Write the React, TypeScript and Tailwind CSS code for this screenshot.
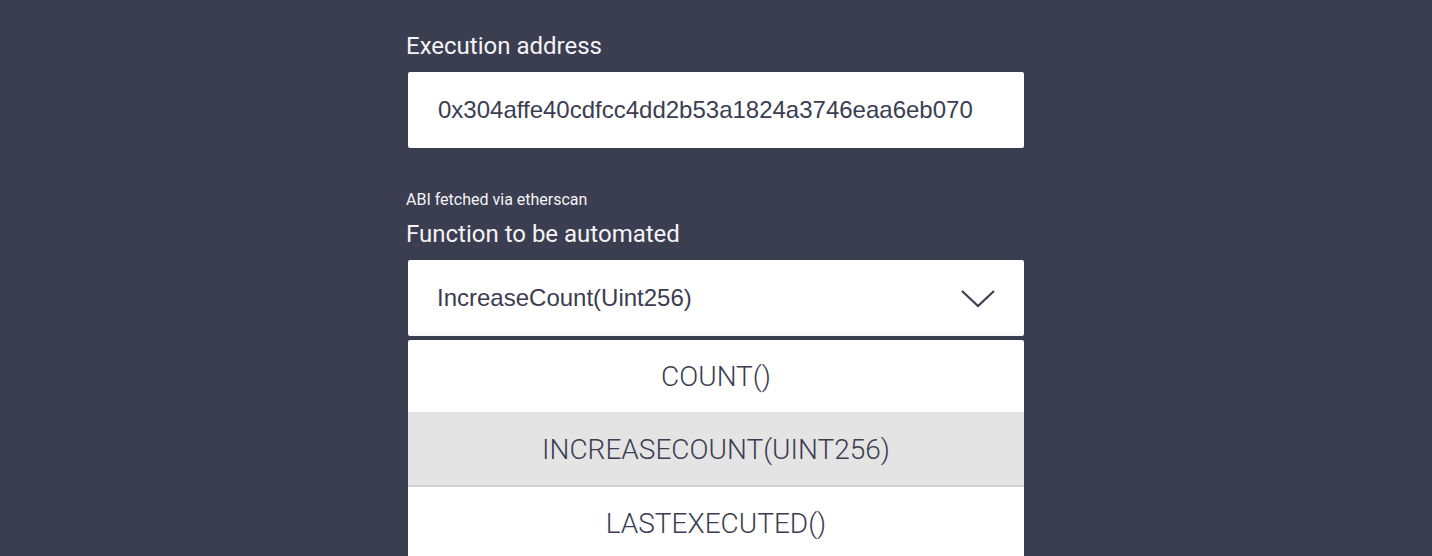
import { useState } from "react";

const functions = ["count()", "increaseCount(uint256)", "lastExecuted()"];

function Chevron() {
  return (
    <svg width="36" height="20" viewBox="0 0 36 20" fill="none" aria-hidden>
      <path d="M2 3 L18 18 L34 3" stroke="#3b3d51" strokeWidth="2.2" strokeLinejoin="miter" />
    </svg>
  );
}

export default function App() {
  const [selected] = useState(1);

  return (
    <div className="min-h-[556px] w-full overflow-hidden bg-[#3b3d51] font-['Roboto',sans-serif]">
      <div className="ml-[406px] w-[618px] pt-[30px]">
        <label className="block text-[24px] leading-[32px] text-[#f4f4f6]">Execution address</label>
        <div className="ml-[2px] mt-[10px] flex h-[76px] items-center rounded-[2px] bg-white pl-[30px]">
          <span className="font-['Liberation_Sans',Arial,sans-serif] text-[24px] text-[#3b3d51]">
            0x304affe40cdfcc4dd2b53a1824a3746eaa6eb070
          </span>
        </div>

        <p className="mt-[42px] text-[16px] leading-[20px] text-[#f4f4f6]">ABI fetched via etherscan</p>
        <label className="mt-[8px] block text-[24px] leading-[32px] text-[#f4f4f6]">Function to be automated</label>

        <div className="ml-[2px] mt-[10px] flex h-[76px] items-center justify-between rounded-[2px] bg-white pl-[29px] pr-[28px] shadow-[inset_0_-6px_6px_-4px_rgba(0,0,0,0.06)]">
          <span className="font-['Liberation_Sans',Arial,sans-serif] text-[24px] text-[#3b3d51]">
            IncreaseCount(Uint256)
          </span>
          <Chevron />
        </div>

        <ul className="ml-[2px] mt-[4px] rounded-t-[2px] bg-white">
          {functions.map((fn, i) => (
            <li
              key={fn}
              className={
                i === selected
                  ? "flex h-[75px] items-center justify-center border-b-2 border-[#d2d2d2] bg-[#e4e4e4] pt-[2px] text-[28px] font-light uppercase text-[#3b3d51]"
                  : "flex h-[72px] items-center justify-center pt-[2px] text-[28px] font-light uppercase text-[#3b3d51]"
              }
            >
              {fn}
            </li>
          ))}
        </ul>
      </div>
    </div>
  );
}
